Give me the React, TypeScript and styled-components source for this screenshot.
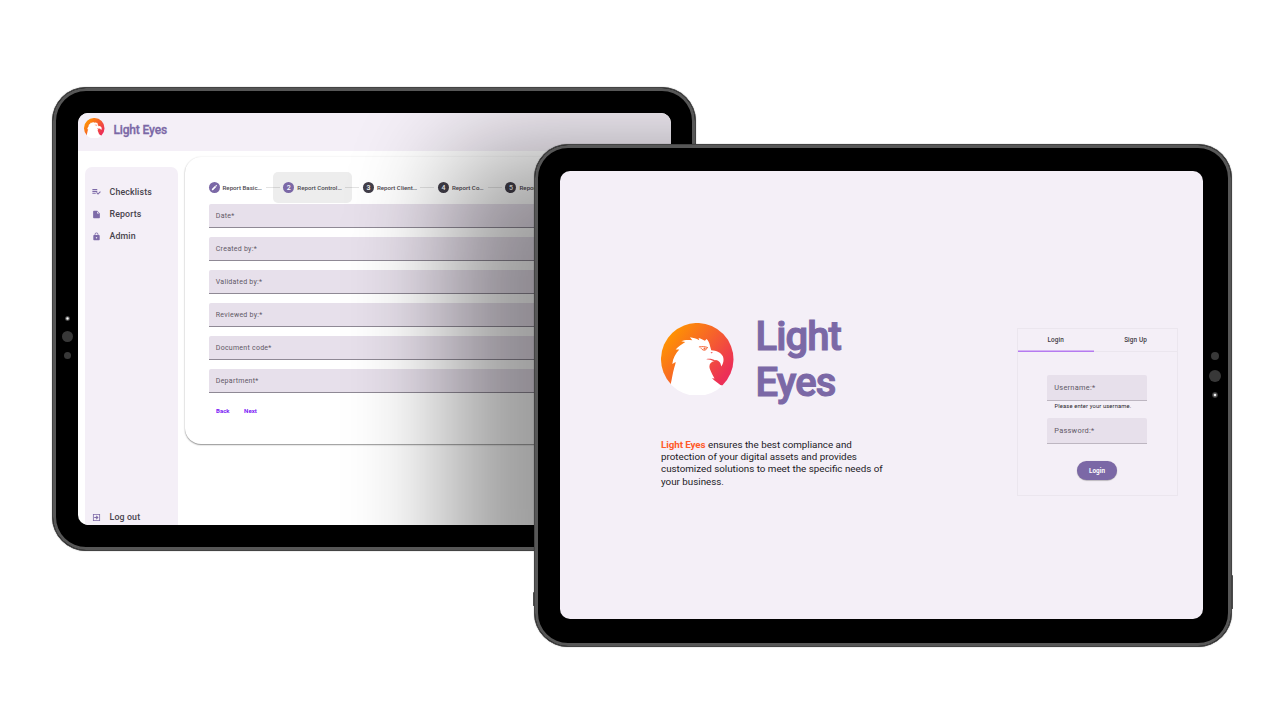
import React from 'react';
import styled, { createGlobalStyle } from 'styled-components';

const GlobalStyle = createGlobalStyle`
  * { box-sizing: border-box; }
  body {
    margin: 0;
    background: #fff;
    font-family: Roboto, "Liberation Sans", sans-serif;
  }
`;

const Stage = styled.main`
  position: relative;
  width: 1280px;
  height: 720px;
  overflow: hidden;
  background: #fff;
`;

const Tablet = styled.section<{ $x: number; $y: number; $w: number; $h: number; $pad: string }>`
  position: absolute;
  left: ${p => p.$x}px;
  top: ${p => p.$y}px;
  width: ${p => p.$w}px;
  height: ${p => p.$h}px;
  padding: ${p => p.$pad};
  display: flex;
  background: #000;
  border: 1px solid #434343;
  border-radius: 34px;
  box-shadow: inset 0 0 0 3px #575757, 0 0 1px rgba(0, 0, 0, 0.6);
`;

const Screen = styled.div<{ $bg: string }>`
  position: relative;
  flex: 1;
  min-width: 0;
  display: flex;
  flex-direction: column;
  overflow: hidden;
  border-radius: 10px;
  background: ${p => p.$bg};
`;

const SideKey = styled.i<{ $edge: 'left' | 'right'; $top: number; $h: number }>`
  position: absolute;
  ${p => p.$edge}: -2px;
  top: ${p => p.$top}px;
  width: 1.5px;
  height: ${p => p.$h}px;
  border-radius: 1px;
  background: #4a4a4a;
`;

const Cameras = styled.div<{ $left: string; $top: number; $flip?: boolean }>`
  position: absolute;
  left: ${p => p.$left};
  top: ${p => p.$top}px;
  width: 12px;
  display: flex;
  flex-direction: ${p => (p.$flip ? 'column-reverse' : 'column')};
  align-items: center;
`;

const Lens = styled.i<{ $size: number; $gap?: number }>`
  width: ${p => p.$size}px;
  height: ${p => p.$size}px;
  margin: ${p => p.$gap ?? 0}px 0;
  border-radius: 50%;
  background: #383838;
`;

const Sensor = styled(Lens)`
  background: radial-gradient(circle, #fff 0 0.6px, #555 1.7px, #2c2c2c 3px);
`;

const CastShadow = styled.div`
  position: absolute;
  left: 371px;
  top: 36px;
  width: 600px;
  height: 700px;
  border-radius: 40px;
  background: #000;
  filter: blur(52px);
  opacity: 0.39;
  pointer-events: none;
`;

const TopBar = styled.header`
  height: 38.5px;
  flex: none;
  display: flex;
  align-items: flex-start;
  gap: 8.5px;
  padding: 5px 0 0 6.5px;
  background: #f4eff7;
`;

const BarTitle = styled.h2`
  margin: 0;
  padding: 5px 0 0 0.5px;
  font-size: 12px;
  line-height: 14px;
  font-weight: 500;
  letter-spacing: -0.16px;
  -webkit-text-stroke: 0.3px #7b68a6;
  color: #7b68a6;
`;

const Workspace = styled.div`
  flex: 1;
  display: flex;
  align-items: flex-start;
  gap: 7px;
  padding: 15.5px 0 0 7px;
  min-height: 0;
`;

const SideNav = styled.nav`
  width: 93px;
  height: 100%;
  flex: none;
  display: flex;
  flex-direction: column;
  padding: 14px 0 0 7px;
  border-radius: 7px 7px 0 0;
  background: #f4eff7;
`;

const NavItem = styled.a<{ $last?: boolean }>`
  display: flex;
  align-items: center;
  gap: 9px;
  height: 22.4px;
  font-size: 8.8px;
  font-weight: 500;
  letter-spacing: 0.14px;
  color: #47434d;
  margin-top: ${p => (p.$last ? 'auto' : 0)};
  margin-bottom: ${p => (p.$last ? '-3.5px' : 0)};
`;

const NavIcon = styled.svg`
  width: 9px;
  height: 9px;
  flex: none;
  fill: #7d6aa8;
`;

const FormCard = styled.div`
  width: 520px;
  height: 286.5px;
  flex: none;
  margin-top: -9.5px;
  padding: 15px 0 0 24px;
  border-radius: 16px;
  background: #fff;
  box-shadow: 0 1px 1.5px rgba(0, 0, 0, 0.42), 0 0 2px rgba(0, 0, 0, 0.08);
`;

const Stepper = styled.div`
  display: flex;
  align-items: center;
  height: 31.5px;
  margin-left: -10px;
`;

const Step = styled.div<{ $hover?: boolean }>`
  display: flex;
  align-items: center;
  gap: 3px;
  flex: none;
  height: 31px;
  padding: 0 10px;
  border-radius: 5px;
  background: ${p => (p.$hover ? '#ededed' : 'transparent')};
`;

const Dot = styled.span<{ $on?: boolean }>`
  width: 11px;
  height: 11px;
  display: flex;
  align-items: center;
  justify-content: center;
  border-radius: 50%;
  font-size: 7px;
  font-weight: 500;
  color: #fff;
  background: ${p => (p.$on ? '#7b68a6' : '#423e49')};
`;

const StepLabel = styled.span<{ $w: number }>`
  width: ${p => p.$w}px;
  font-size: 6.15px;
  font-weight: 500;
  white-space: nowrap;
  color: #4b474f;
`;

const Line = styled.i`
  width: 14px;
  height: 1px;
  flex: none;
  margin: 0 -6.5px;
  background: rgba(0, 0, 0, 0.11);
  z-index: 1;
`;

const Fields = styled.div`
  display: flex;
  flex-direction: column;
  gap: 8.5px;
`;

const Field = styled.div<{ $h: number; $size: number; $soft?: boolean }>`
  height: ${p => p.$h}px;
  display: flex;
  align-items: center;
  padding: 1px 0 0 7.3px;
  border-bottom: 1px solid ${p => (p.$soft ? '#bdb6c1' : '#8f8995')};
  border-radius: 2px 2px 0 0;
  background: #e7e0eb;
  color: #5f5966;
  font-size: ${p => p.$size}px;
  letter-spacing: 0.26px;
`;

const StepActions = styled.div`
  display: flex;
  gap: 14.5px;
  padding: 12.5px 0 0 7.5px;
  font-size: 6.1px;
  line-height: 9px;
  font-weight: 700;
  color: #7a17f5;
`;

const Landing = styled.div`
  flex: 1;
  display: flex;
  align-items: flex-start;
  justify-content: space-between;
  padding: 142px 25px 0 101px;
`;

const Brand = styled.div`
  width: 240px;
`;

const BrandRow = styled.div`
  display: flex;
  align-items: center;
  gap: 22px;
`;

const BrandName = styled.h1`
  margin: 0;
  padding-top: 1px;
  font-size: 40px;
  line-height: 45.5px;
  font-weight: 500;
  letter-spacing: -0.9px;
  -webkit-text-stroke: 1.1px #7b68a6;
  color: #7b68a6;
`;

const Blurb = styled.p`
  margin: 34px 0 0;
  font-size: 9.8px;
  line-height: 12.2px;
  letter-spacing: 0;
  white-space: nowrap;
  color: #1c1a1f;
`;

const Accent = styled.strong`
  font-weight: 700;
  letter-spacing: -0.08px;
  color: #ff5a2a;
`;

const LoginCard = styled.div`
  width: 161.5px;
  height: 168px;
  margin-top: 15px;
  border: 1px solid #ebe6ee;
`;

const Tabs = styled.div`
  display: flex;
  height: 23px;
  box-shadow: inset 0 -1px #ebe6ee;
`;

const Tab = styled.div<{ $on?: boolean }>`
  width: ${p => (p.$on ? 76.5 : 83)}px;
  height: 23px;
  text-align: center;
  font-size: 6.4px;
  line-height: 23px;
  font-weight: 500;
  letter-spacing: 0.1px;
  color: #3d3942;
  box-shadow: ${p => (p.$on ? 'inset 0 -1.5px #b57af0' : 'none')};
`;

const LoginForm = styled.div`
  display: flex;
  flex-direction: column;
  padding: 22.5px 30px 0 29.5px;
`;

const Hint = styled.small`
  height: 16.5px;
  padding: 1px 0 0 7.5px;
  font-size: 5.8px;
  line-height: 9px;
  letter-spacing: 0.13px;
  white-space: nowrap;
  color: #28252b;
`;

const LoginButton = styled.button`
  align-self: center;
  width: 40px;
  height: 19.5px;
  margin-top: 16.5px;
  padding: 1px 0 0;
  border: 0;
  border-radius: 10px;
  background: #7b68a6;
  box-shadow: 0 0.5px 1px rgba(0, 0, 0, 0.4);
  color: #fff;
  font: 700 6.4px Roboto, "Liberation Sans", sans-serif;
`;

const LogoSvg = styled.svg`
  flex: none;
`;

function EagleLogo({ size, id }: { size: number; id: string }) {
  return (
    <LogoSvg width={size} height={size} viewBox="17 14 218 218">
      <defs>
        <linearGradient id={id} x1="0" y1="0.15" x2="1" y2="0.85">
          <stop offset="0.08" stopColor="#ff9500" />
          <stop offset="0.5" stopColor="#f6622b" />
          <stop offset="0.92" stopColor="#ec2f57" />
        </linearGradient>
        <clipPath id={`${id}-clip`}>
          <circle cx="126" cy="123" r="110" />
        </clipPath>
      </defs>
      <path d="M47 198 A109 109 0 1 1 202 201 Z" fill={`url(#${id})`} />
      <g clipPath={`url(#${id}-clip)`}>
        <path
          fill="#fff"
          d="M20 240 L46 198 C50 184 52 164 57 148 C59 141 61 136 61 131 L51 137 C53 120 60 107 72 94 L61 94 C68 84 80 78 90 71 L78 69 C88 64 99 64 111 66 L104 57 C114 58 123 61 132 66 L130 59 C137 60 143 65 149 67 L154 62 C159 67 163 74 164 82 L168 96 C184 97 197 103 203 114 C207 123 205 136 198 145 C197 134 193 127 181 125 L178 128 C165 130 160 141 164 152 C168 163 173 171 178 181 L170 180 C180 190 192 196 201 205 L220 240 Z"
        />
      </g>
      <path
        d="M131 86 C141 84 151 85 158 88 M137 88 C139 97 154 99 155 89"
        fill="none"
        stroke="#f4683a"
        strokeWidth="3"
      />
      <circle cx="148" cy="91" r="3.2" fill="#f4683a" />
      <path d="M166 103 q5 -3 6 -1 q-1 4 -4 3 z" fill="#ef4a4a" />
      <path d="M153 123 C162 120 172 122 181 127 L176 129 C169 125 161 124 153 123 Z" fill="#ef4a4a" />
    </LogoSvg>
  );
}

const steps = [
  { label: 'Report Basic…', w: 39.8, on: true },
  { label: 'Report Control…', w: 44.6, on: true, hover: true },
  { label: 'Report Client…', w: 40, on: false },
  { label: 'Report Co…', w: 32.6, on: false },
  { label: 'Report Co…', w: 40, on: false },
];

const fields = ['Date*', 'Created by:*', 'Validated by:*', 'Reviewed by:*', 'Document code*', 'Department*'];

const navItems = [
  { label: 'Checklists', d: 'M1 5h13v3H1zM1 10h13v3H1zM1 15h9v3H1zM21.5 11 23.5 13l-7.5 7.5-5-5L13 13.500l3 3z' },
  { label: 'Reports', d: 'M5 2h9l7 7v11a2 2 0 0 1-2 2H5a2 2 0 0 1-2-2V4a2 2 0 0 1 2-2zm8.5 1.8V9.5h5.5z' },
  { label: 'Admin', d: 'M18.5 8H17V6A5 5 0 0 0 7 6v2H5.500a2 2 0 0 0-2 2v10a2 2 0 0 0 2 2h13a2 2 0 0 0 2-2V10a2 2 0 0 0-2-2zM9 6a3 3 0 0 1 6 0v2H9zm3 11a2 2 0 1 1 0-4 2 2 0 0 1 0 4z' },
];

export default function App() {
  return (
    <Stage>
      <GlobalStyle />
      <Tablet $x={51.5} $y={87} $w={644.5} $h={463.5} $pad="24.5px 24px 24.5px 25px">
        <Cameras $left="8.5px" $top={228}>
          <Sensor $size={5} />
          <Lens $size={11} $gap={10} />
          <Lens $size={7} />
        </Cameras>
        <Screen $bg="#fff">
          <TopBar>
            <EagleLogo size={20.5} id="logo-small" />
            <BarTitle>Light Eyes</BarTitle>
          </TopBar>
          <Workspace>
            <SideNav>
              {navItems.map(item => (
                <NavItem key={item.label}>
                  <NavIcon viewBox="0 0 24 24"><path fillRule="evenodd" d={item.d} /></NavIcon>
                  {item.label}
                </NavItem>
              ))}
              <NavItem $last>
                <NavIcon viewBox="0 0 24 24">
                  <path fillRule="evenodd" d="M2.500 2.500h19v19h-19zm2.200 2.200v14.600h14.600V4.700zM6 10.700h6.500L10 8.500 12 6.500l5.500 5.500-5.500 5.500-2-2 2.500-2.200H6z" />
                </NavIcon>
                Log out
              </NavItem>
            </SideNav>
            <FormCard>
              <Stepper>
                {steps.map((s, i) => (
                  <React.Fragment key={i}>
                    {i > 0 && <Line />}
                    <Step $hover={s.hover}>
                      <Dot $on={s.on}>
                        {i === 0 ? (
                          <svg width="7" height="7" viewBox="0 0 24 24" fill="#fff">
                            <path d="M3 17.200V21h3.800L17.800 9.900l-3.700-3.700zM20.700 7a1 1 0 0 0 0-1.400l-2.300-2.300a1 1 0 0 0-1.400 0l-1.800 1.800 3.700 3.700z" />
                          </svg>
                        ) : i + 1}
                      </Dot>
                      <StepLabel $w={s.w}>{s.label}</StepLabel>
                    </Step>
                  </React.Fragment>
                ))}
              </Stepper>
              <Fields>
                {fields.map(f => <Field key={f} $h={24.5} $size={7}>{f}</Field>)}
              </Fields>
              <StepActions>
                <span>Back</span>
                <span>Next</span>
              </StepActions>
            </FormCard>
          </Workspace>
          <CastShadow />
        </Screen>
      </Tablet>

      <Tablet $x={533.5} $y={144} $w={698.5} $h={502.5} $pad="26px 28px 26.5px 25.5px">
        <SideKey $edge="left" $top={447} $h={14} />
        <SideKey $edge="right" $top={430} $h={34} />
        <Screen $bg="#f4eff7">
          <Landing>
            <Brand>
              <BrandRow>
                <EagleLogo size={72.5} id="logo-large" />
                <BrandName>Light<br />Eyes</BrandName>
              </BrandRow>
              <Blurb>
                <Accent>Light Eyes</Accent> ensures the best compliance and<br />
                protection of your digital assets and provides<br />
                customized solutions to meet the specific needs of<br />
                your business.
              </Blurb>
            </Brand>
            <LoginCard>
              <Tabs>
                <Tab $on>Login</Tab>
                <Tab>Sign Up</Tab>
              </Tabs>
              <LoginForm>
                <Field $h={26.5} $size={7.4} $soft>Username:*</Field>
                <Hint>Please enter your username.</Hint>
                <Field $h={26.5} $size={7.4} $soft>Password:*</Field>
                <LoginButton>Login</LoginButton>
              </LoginForm>
            </LoginCard>
          </Landing>
        </Screen>
        <Cameras $left="674px" $top={206.5} $flip>
          <Sensor $size={6} />
          <Lens $size={12} $gap={10} />
          <Lens $size={8} />
        </Cameras>
      </Tablet>
    </Stage>
  );
}
